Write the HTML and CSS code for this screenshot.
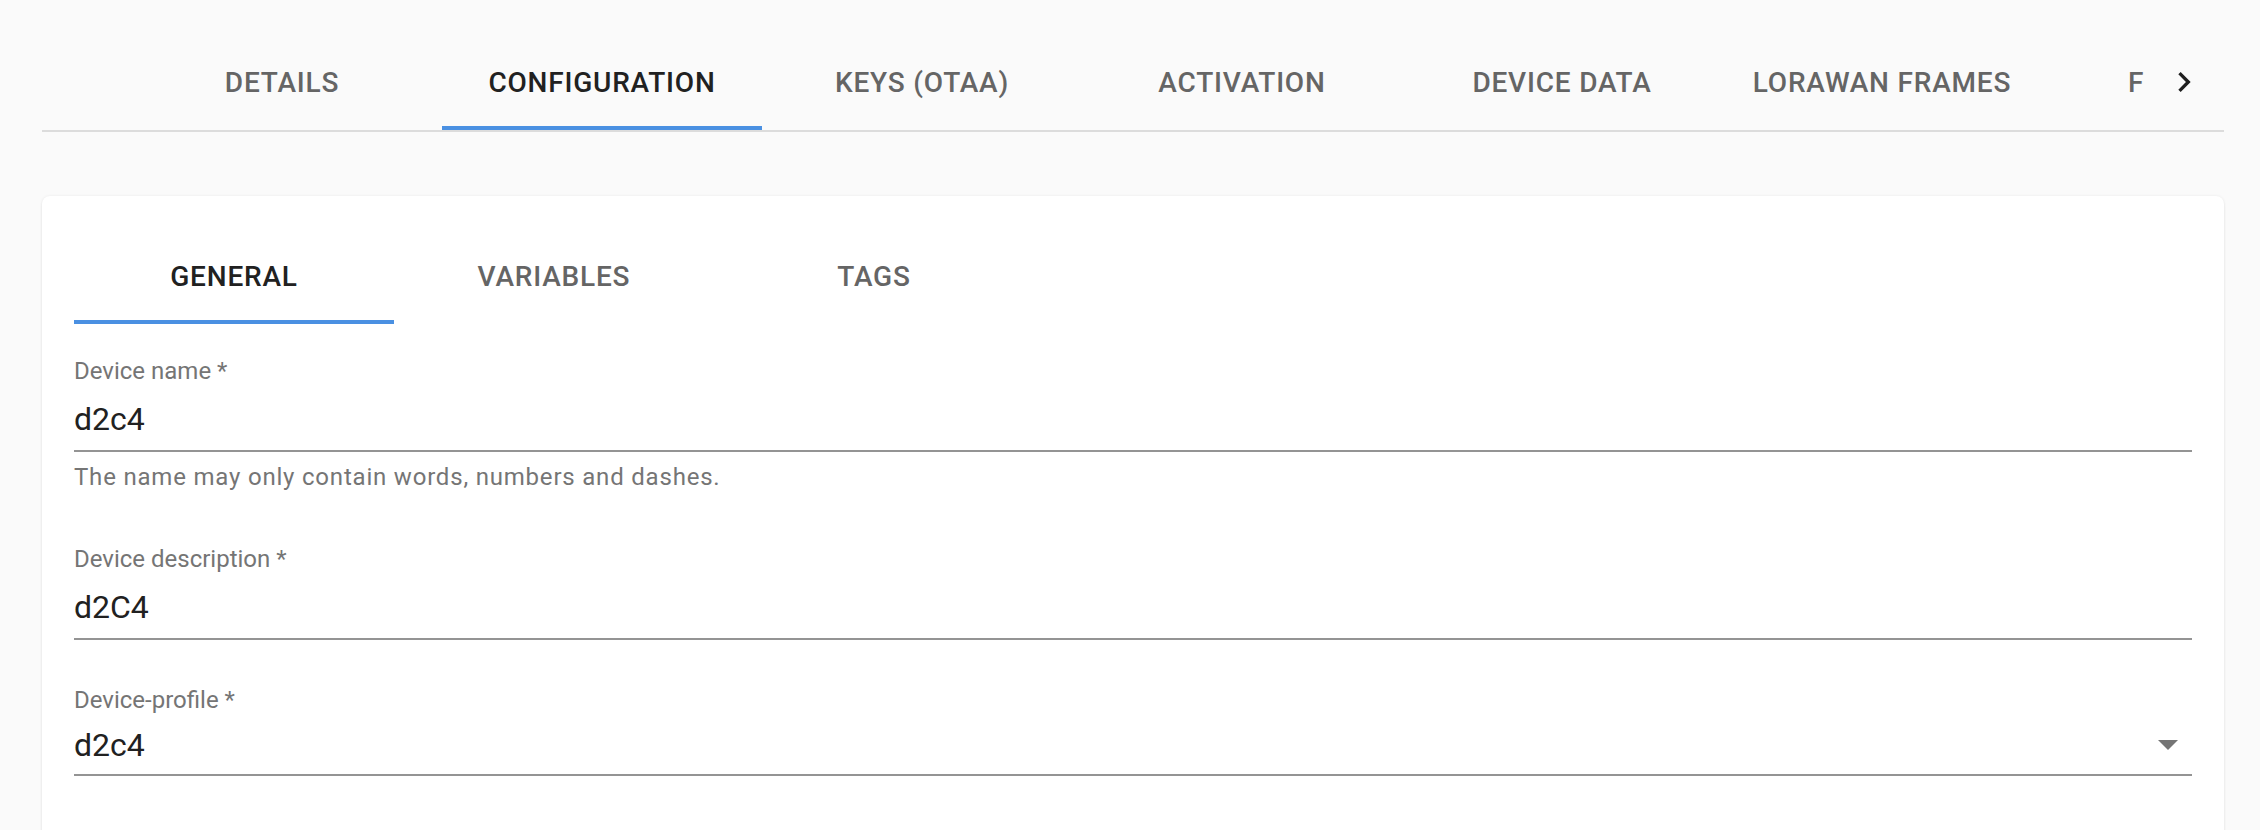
FILE: index.html
```html
<!DOCTYPE html>
<html lang="en">
<head>
<meta charset="utf-8">
<title>Device configuration</title>
<link rel="stylesheet" href="styles.css">
</head>
<body>
<div class="page">
  <div class="tabbar">
    <div class="scroll-btn"></div>
    <div class="tab-scroller">
      <div class="tab">Details</div>
      <div class="tab active">Configuration</div>
      <div class="tab">Keys (OTAA)</div>
      <div class="tab">Activation</div>
      <div class="tab">Device data</div>
      <div class="tab">LoRaWAN frames</div>
      <div class="tab">Firmware</div>
    </div>
    <div class="scroll-btn">
      <svg class="chevron" viewBox="0 0 24 24" width="40" height="40"><path d="M8.59 16.59L13.17 12 8.59 7.41 10 6l6 6-6 6-1.41-1.41z"/></svg>
    </div>
  </div>

  <div class="card">
    <div class="subtabs">
      <div class="tab active">General</div>
      <div class="tab">Variables</div>
      <div class="tab">Tags</div>
    </div>

    <div class="form">
      <div class="field">
        <div class="label">Device name *</div>
        <div class="input">d2c4</div>
        <div class="helper">The name may only contain words, numbers and dashes.</div>
      </div>

      <div class="field">
        <div class="label">Device description *</div>
        <div class="input">d2C4</div>
      </div>

      <div class="field field-select">
        <div class="label">Device-profile *</div>
        <div class="select">
          <div class="select-value">d2c4</div>
          <svg class="arrow" viewBox="0 0 24 24" width="48" height="48"><path d="M7 10l5 5 5-5z"/></svg>
        </div>
      </div>
    </div>
  </div>
</div>
</body>
</html>
```

FILE: styles.css
```css
html, body {
  margin: 0;
  padding: 0;
  background: #fafafa;
}

body {
  font-family: Roboto, "Noto Sans", "Liberation Sans", sans-serif;
  color: rgba(0, 0, 0, 0.87);
}

.page {
  width: 2182px;
  padding: 34px 0 0 42px;
}

.tabbar {
  display: flex;
  height: 96px;
  border-bottom: 2px solid #dcdcdc;
}

.scroll-btn {
  flex: 0 0 80px;
  display: flex;
  align-items: center;
  justify-content: center;
}

.chevron {
  fill: #1f1f1f;
  display: block;
}

.tab-scroller {
  flex: 1;
  display: flex;
  overflow: hidden;
  white-space: nowrap;
}

.tab {
  flex: 0 0 320px;
  height: 96px;
  display: flex;
  align-items: center;
  justify-content: center;
  position: relative;
  font-size: 28px;
  font-weight: 500;
  letter-spacing: 0.8px;
  text-transform: uppercase;
  color: #656565;
  box-sizing: border-box;
}

.tab.active {
  color: #212121;
}

.tab.active::after {
  content: "";
  position: absolute;
  left: 0;
  right: 0;
  bottom: 0;
  height: 4px;
  background: #4a90e2;
}

.card {
  margin-top: 64px;
  background: #fff;
  border-radius: 8px;
  padding: 32px 32px 40px;
  box-shadow: 0 2px 3px rgba(0, 0, 0, 0.06), 0 0 3px rgba(0, 0, 0, 0.07);
  min-height: 600px;
}

.subtabs {
  display: flex;
  height: 96px;
}

.form {
  display: flex;
  flex-direction: column;
}

.field {
  margin-top: 32px;
  margin-bottom: 16px;
}

.label {
  height: 32px;
  box-sizing: border-box;
  padding-top: 3px;
  font-size: 24px;
  line-height: 24px;
  color: #757575;
}

.input {
  height: 64px;
  box-sizing: border-box;
  padding-top: 12px;
  font-size: 32px;
  line-height: 38px;
  color: #212121;
  border-bottom: 2px solid #949494;
}

.helper {
  margin-top: 6px;
  font-size: 24px;
  line-height: 38px;
  letter-spacing: 0.8px;
  color: #757575;
}

.field-select {
  margin-top: 29px;
}

.select {
  display: flex;
  align-items: flex-start;
  height: 59px;
  box-sizing: border-box;
  border-bottom: 2px solid #949494;
}

.select-value {
  flex: 1;
  padding-top: 9px;
  font-size: 32px;
  line-height: 38px;
  color: #212121;
}

.arrow {
  margin-top: 3px;
  fill: #757575;
  display: block;
}
```
